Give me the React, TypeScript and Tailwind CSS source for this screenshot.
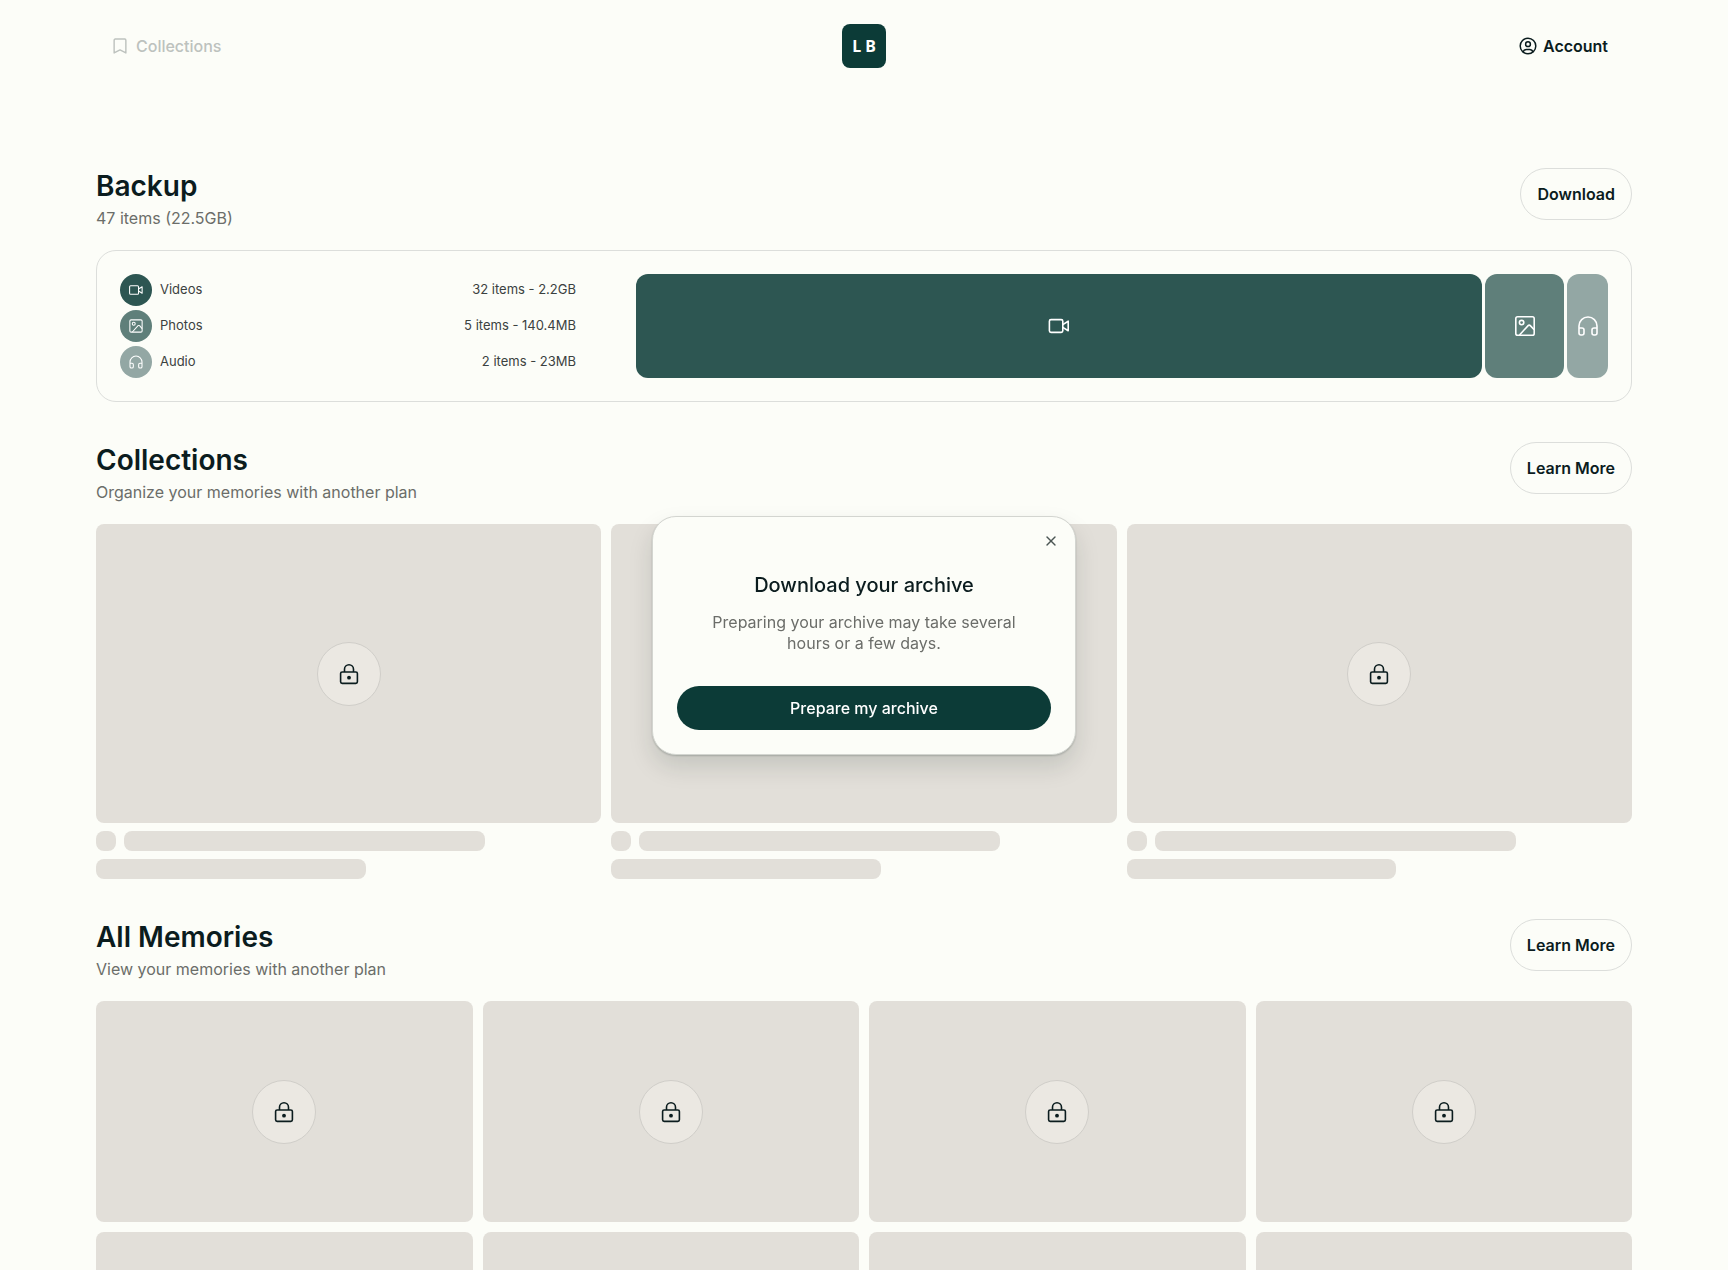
import { Headphones, X } from "lucide-react";

import type { ReactNode } from "react";

interface IconProps {
  className?: string;
}

interface SectionHeaderProps {
  title: string;
  subtitle: string;
  action: string;
}

const BookmarkIcon = ({ className }: IconProps) => (
  <svg
    viewBox="0 0 18 18"
    fill="none"
    stroke="currentColor"
    strokeWidth="1.6"
    strokeLinejoin="round"
    className={className}
  >
    <path d="M3.6 1.2h10.8a1.2 1.2 0 0 1 1.2 1.2v14.4L9 13.4l-6.6 3.4V2.4a1.2 1.2 0 0 1 1.2-1.2z" />
  </svg>
);

const AccountIcon = ({ className }: IconProps) => (
  <svg
    viewBox="0 0 18 18"
    fill="none"
    stroke="currentColor"
    strokeWidth="1.5"
    strokeLinecap="round"
    className={className}
  >
    <circle cx="9" cy="9" r="7.8" />
    <circle cx="9" cy="7.2" r="2.4" />
    <path d="M4.2 14.8c.5-1.500 1.700-2.300 3.200-2.300h3.200c1.500 0 2.700.8 3.200 2.300" />
  </svg>
);

const VideoIcon = ({ className }: IconProps) => (
  <svg
    viewBox="0 0 24 24"
    fill="none"
    stroke="currentColor"
    strokeWidth="1.6"
    strokeLinejoin="round"
    className={className}
  >
    <rect x="2.4" y="5.6" width="13.4" height="12.8" rx="1.6" />
    <path d="M15.800 10.600l5.400-3.400v9.600l-5.400-3.400" />
  </svg>
);

const PhotoIcon = ({ className }: IconProps) => (
  <svg
    viewBox="0 0 24 24"
    fill="none"
    stroke="currentColor"
    strokeWidth="1.6"
    strokeLinejoin="round"
    className={className}
  >
    <rect x="2.8" y="2.8" width="18.4" height="18.4" rx="1.8" />
    <circle cx="8.6" cy="8.6" r="2.200" />
    <path d="M6.500 21l8.600-9.400a1.500 1.500 0 0 1 2.200 0l3.900 4.200" />
  </svg>
);

const LockIcon = ({ className }: IconProps) => (
  <svg
    viewBox="0 0 24 24"
    fill="none"
    stroke="currentColor"
    strokeWidth="1.6"
    className={className}
  >
    <rect x="3.6" y="10" width="16.8" height="11.4" rx="1.6" />
    <path d="M7.500 10V7.200a4.500 4.500 0 0 1 9 0V10" />
    <circle cx="12" cy="15.700" r="1.900" fill="currentColor" stroke="none" />
  </svg>
);

const AudioIcon = ({ className }: IconProps) => (
  <Headphones strokeWidth={1.6} className={className} />
);

const media = [
  {
    name: "Videos",
    detail: "32 items - 2.2GB",
    share: 846,
    color: "bg-[#2d5652]",
    Icon: VideoIcon,
  },
  {
    name: "Photos",
    detail: "5 items - 140.4MB",
    share: 79,
    color: "bg-[#5f7f7a]",
    Icon: PhotoIcon,
  },
  {
    name: "Audio",
    detail: "2 items - 23MB",
    share: 41,
    color: "bg-[#93a7a4]",
    Icon: AudioIcon,
  },
];

const SectionHeader = ({ title, subtitle, action }: SectionHeaderProps) => (
  <div className="flex items-start justify-between mb-5">
    <div>
      <h2 className="text-[28px] leading-9 font-semibold">{title}</h2>
      <p className="mt-0.5 text-base leading-6 text-[#6b6d69]">{subtitle}</p>
    </div>
    <button
      type="button"
      className="h-13 px-4 rounded-full border border-[#dcdedb] text-base font-semibold cursor-pointer"
    >
      {action}
    </button>
  </div>
);

const LockedTile = ({ className }: IconProps) => (
  <div
    className={`flex items-center justify-center rounded-lg bg-[#e2dfd9] ${className}`}
  >
    <div className="flex items-center justify-center size-16 rounded-full border border-[#d0cec9] bg-[#ebe8e2]">
      <LockIcon className="size-6" />
    </div>
  </div>
);

const Section = ({ children }: { children: ReactNode }) => (
  <section className="mb-10">{children}</section>
);

const ArchiveDialog = () => (
  <div className="fixed inset-0 flex items-center justify-center">
    <div
      role="dialog"
      aria-labelledby="archive-title"
      className="relative w-full max-w-[424px] px-6 pt-14 pb-6 rounded-3xl border border-[#d3d5d0] bg-[#fcfdf8] text-center shadow-[0_12px_24px_rgba(10,30,25,0.13),0_1px_2px_rgba(10,30,25,0.2)]"
    >
      <button
        type="button"
        aria-label="Close"
        className="absolute top-4 right-4 p-0 text-[#4a5553] cursor-pointer"
      >
        <X strokeWidth={2} className="size-4" />
      </button>
      <h3 id="archive-title" className="text-xl leading-6 font-medium">
        Download your archive
      </h3>
      <p className="max-w-[320px] mx-auto mt-[15px] mb-8 text-base leading-[21px] text-[#6b6d69]">
        Preparing your archive may take several hours or a few days.
      </p>
      <button
        type="button"
        className="w-full h-11 rounded-full bg-[#0c3b37] text-base font-medium text-white cursor-pointer"
      >
        Prepare my archive
      </button>
    </div>
  </div>
);

const App = () => {
  return (
    <div className="h-screen overflow-hidden bg-[#fcfdf8] text-[#0b1c1e] font-['Inter',sans-serif]">
      <div className="max-w-[1728px] mx-auto px-24">
        <header className="grid grid-cols-3 items-center h-[92px] px-4">
          <a
            href="#collections"
            className="flex items-center gap-2 justify-self-start text-base font-medium text-[#bdc2be]"
          >
            <BookmarkIcon className="size-4" />
            Collections
          </a>
          <a
            href="#home"
            className="flex items-center justify-center gap-1 size-11 justify-self-center rounded-lg bg-[#0c3b37] font-['Noto_Sans',sans-serif] text-base font-bold text-white"
          >
            <span>L</span>
            <span>B</span>
          </a>
          <a
            href="#account"
            className="flex items-center gap-1.5 justify-self-end mr-2 text-base font-semibold"
          >
            <AccountIcon className="size-[18px]" />
            Account
          </a>
        </header>

        <main className="pt-19">
          <Section>
            <SectionHeader
              title="Backup"
              subtitle="47 items (22.5GB)"
              action="Download"
            />
            <div className="grid grid-cols-[456fr_972fr] gap-15 p-[23px] rounded-[20px] border border-[#dcdedb]">
              <ul className="flex flex-col gap-1">
                {media.map(({ name, detail, color, Icon }) => (
                  <li
                    key={name}
                    className="flex items-center gap-2 text-[13px] text-[#3b4140]"
                  >
                    <span
                      className={`flex items-center justify-center size-8 rounded-full text-white ${color}`}
                    >
                      <Icon className="size-4" />
                    </span>
                    <span>{name}</span>
                    <span className="ml-auto">{detail}</span>
                  </li>
                ))}
              </ul>
              <div className="flex gap-[3px]">
                {media.map(({ name, share, color, Icon }) => (
                  <div
                    key={name}
                    className={`flex items-center justify-center basis-0 rounded-xl text-white ${color}`}
                    style={{ flexGrow: share }}
                  >
                    <Icon className="size-6" />
                  </div>
                ))}
              </div>
            </div>
          </Section>

          <Section>
            <SectionHeader
              title="Collections"
              subtitle="Organize your memories with another plan"
              action="Learn More"
            />
            <div className="grid grid-cols-3 gap-2.5">
              {[0, 1, 2].map((i) => (
                <div key={i}>
                  <LockedTile className="aspect-[505/299]" />
                  <div className="flex gap-2 mt-2">
                    <div className="size-5 rounded-lg bg-[#e2dfd9]" />
                    <div className="w-5/7 h-5 rounded-lg bg-[#e2dfd9]" />
                  </div>
                  <div className="w-8/15 h-5 mt-2 rounded-lg bg-[#e2dfd9]" />
                </div>
              ))}
            </div>
          </Section>

          <Section>
            <SectionHeader
              title="All Memories"
              subtitle="View your memories with another plan"
              action="Learn More"
            />
            <div className="grid grid-cols-4 gap-2.5">
              {[0, 1, 2, 3, 4, 5, 6, 7].map((i) => (
                <LockedTile key={i} className="aspect-[376/221]" />
              ))}
            </div>
          </Section>
        </main>
      </div>
      <ArchiveDialog />
    </div>
  );
};

export default App;
